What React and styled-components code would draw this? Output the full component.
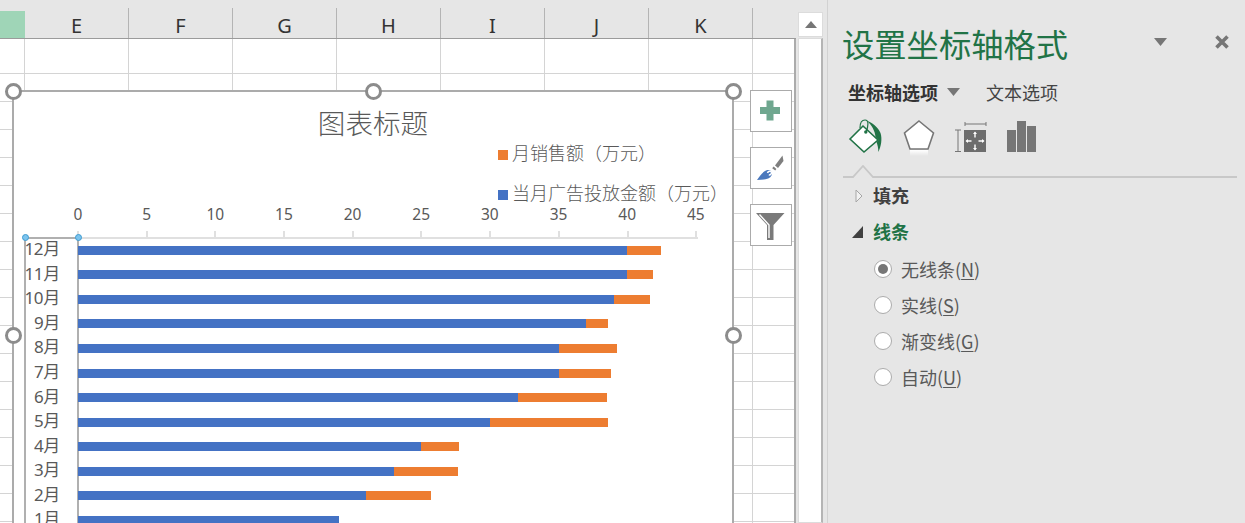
import React from "react";
import styled, { createGlobalStyle } from "styled-components";

const FONT = `"Noto Sans", "Noto Sans CJK SC", sans-serif`;
const CJK = `"Noto Sans CJK SC", "Noto Sans", sans-serif`;
const GREEN = "#217346";
const GRID = "#d4d4d4";

const Global = createGlobalStyle`
  html, body { margin: 0; padding: 0; background: #e6e6e6; overflow: hidden; }
  * { box-sizing: border-box; }
`;

const Page = styled.div`
  display: flex; width: 1245px; height: 523px; overflow: hidden;
  background: #e6e6e6; font-family: ${FONT}; color: #595959;
`;

/* ---- worksheet ---- */
const Sheet = styled.div`
  width: 796px; height: 523px; display: flex; flex-direction: column; flex: none;
`;
const ColHeader = styled.div`
  display: flex; align-items: flex-end; height: 39px; flex: none;
  border-bottom: 1px solid #9b9b9b;
`;
const Corner = styled.div`
  width: 25px; height: 27px; background: #9fd5b7; flex: none;
`;
const ColCell = styled.div`
  width: ${p => p.$w || 104}px; height: 30px; flex: none;
  display: flex; justify-content: center; align-items: center;
  border-right: ${p => (p.$last ? "none" : "1px solid #b4b4b4")};
  font-size: 20px; color: #333; line-height: 1; padding-top: 5px;
`;
const Grid = styled.div`
  position: relative; flex: 1; background: #fff; overflow: hidden;
  border-right: 2px solid #ababab;
`;
const GridRow = styled.div`
  height: ${p => p.$h}px;
  border-bottom: 1px solid ${GRID};
  padding-left: 24px;
  display: flex;
`;
const GridCell = styled.div`
  width: 104px; flex: none; height: 100%;
  border-left: 1px solid ${GRID};
`;

/* ---- chart ---- */
const Chart = styled.div`
  position: absolute; left: 12px; top: 51px; width: 722px; height: 520px;
  background: #fff; border: 2px solid #ababab; display: flex; flex-direction: column;
`;
const Handle = styled.div`
  position: absolute; width: 17px; height: 17px; border-radius: 50%;
  background: #fff; border: 3px solid #8c8c8c;
  left: ${p => p.$x - 8.5 - 14}px; top: ${p => p.$y - 8.5 - 92}px; z-index: 3;
`;
const ChartTitle = styled.div`
  padding-top: 11px; height: 50px; line-height: 38px; text-align: center; flex: none;
  font-family: ${CJK}; font-size: 27.6px; font-weight: 300; color: #595959;
`;
const Legend = styled.div`
  display: flex; flex-direction: column; gap: 20px; margin: 1px 0 0 484px; flex: none;
`;
const LegendItem = styled.div`
  display: flex; align-items: center; gap: 4px; height: 20px; line-height: 20px; white-space: nowrap;
  font-family: ${CJK}; font-size: 18px; font-weight: 300; color: #595959;
`;
const LegendText = styled.span`
  padding-bottom: 2px;
`;
const Swatch = styled.span`
  width: 10px; height: 10px; flex: none; margin-top: 4px; background: ${p => p.$c};
`;
const AxisLabels = styled.div`
  display: flex; margin: 1px 0 0 29.7px; height: 20px; flex: none;
`;
const AxisLabel = styled.div`
  width: 68.65px; flex: none; text-align: center; font-size: 15.5px; line-height: 20px; color: #595959;
`;
const AxisLine = styled.div`
  margin: 7px 0 0 63px; width: 621px; height: 8px; border-bottom: 2px solid #e0e0e0; flex: none;
  background-image: repeating-linear-gradient(to right, #e0e0e0 0 2px, transparent 2px 68.7px);
`;
const Plot = styled.div`
  position: relative; margin-top: -1px;
`;
const SelectBox = styled.div`
  position: absolute; left: 10px; top: -1px; width: 55px; height: 400px;
  border: 2px solid #b0b0b0; border-bottom: none;
`;
const BlueDot = styled.div`
  position: absolute; top: -4px; left: ${p => p.$x}px; width: 7px; height: 7px; border-radius: 50%;
  background: #7cc4ee; border: 1px solid #3f9bd0; z-index: 2;
`;
const BarRow = styled.div`
  display: flex; align-items: center; height: 24.55px; position: relative;
`;
const MonthLabel = styled.div`
  width: 64px; flex: none; padding: 0 18px 2px 0; text-align: right; white-space: nowrap;
  font-size: 17px; line-height: 20px; color: #595959;
  font-family: ${FONT}; letter-spacing: -0.3px;
`;
const Segment = styled.div`
  height: 9px; background: ${p => p.$c}; flex: none;
`;

/* ---- chart side buttons ---- */
const ChartTools = styled.div`
  position: absolute; left: 750px; top: 51px; display: flex; flex-direction: column; gap: 15px; z-index: 4;
`;
const ToolButton = styled.div`
  width: 42px; height: 42px; background: #fff; border: 1px solid #ababab; display: flex;
`;

/* ---- scrollbar ---- */
const Scrollbar = styled.div`
  width: 25px; margin-left: 2px; height: 523px; flex: none; padding-top: 12px;
  display: flex; flex-direction: column;
`;
const ScrollUp = styled.div`
  height: 25px; background: #fff; border: 1px solid #dcdcdc; display: flex; align-items: center; justify-content: center;
`;
const ScrollTrack = styled.div`
  flex: 1; background: #fff; border: 1px solid #dcdcdc; border-right: 2px solid #b5b5b5; margin-top: 1px;
`;

/* ---- format pane ---- */
const Pane = styled.div`
  flex: 1; margin-left: 4px; padding-left: 14px; border-left: 1px solid #d2d2d2; height: 523px;
  display: flex; flex-direction: column;
`;
const TitleRow = styled.div`
  display: flex; align-items: center; height: 46px; margin-top: 20px; position: relative;
`;
const PaneTitle = styled.div`
  font-family: ${CJK}; font-size: 32.3px; line-height: 46px; color: ${GREEN}; white-space: nowrap; width: 312px; font-weight: 400;
`;
const TitleActions = styled.div`
  display: flex; align-items: center; gap: 48px; margin-top: -2px;
`;
const Tabs = styled.div`
  display: flex; align-items: center; gap: 9px; height: 28px; margin: 12px 0 0 6px;
`;
const Tab = styled.div`
  font-family: ${CJK}; font-size: 18px; line-height: 28px; white-space: nowrap; margin-left: ${p => p.$ml || 0}px;
  font-weight: ${p => (p.$active ? 700 : 400)}; color: ${p => (p.$active ? "#333" : "#444")};
`;
const IconRow = styled.div`
  display: flex; margin: 12px 0 0 6px; height: 38px;
`;
const IconSlot = styled.svg`
  display: block; flex: none; margin-left: ${p => p.$ml || 0}px;
`;
const Separator = styled.svg`
  display: block; margin: 9px 0 0 1px; flex: none;
`;
const SectionRow = styled.div`
  display: flex; align-items: center; height: ${p => p.$h}px; position: relative; padding: 0 0 2px 31px;
`;
const SectionLabel = styled.div`
  font-family: ${CJK}; font-size: 18px; font-weight: 700; color: ${p => (p.$on ? GREEN : "#404040")};
`;
const Marker = styled.svg`
  position: absolute; left: ${p => p.$x}px; top: 50%; transform: translateY(-50%);
`;
const Options = styled.div`
  display: flex; flex-direction: column; margin: 2px 0 0 32px;
`;
const Option = styled.div`
  display: flex; align-items: center; gap: 9px; height: 36px; font-size: 18px; color: #595959; font-family: ${CJK};
`;
const RadioDot = styled.span`
  width: 18px; height: 18px; border-radius: 50%; background: #fff; border: 1.5px solid #ababab;
  display: flex; align-items: center; justify-content: center; flex: none;
  &::after {
    content: ""; width: 10px; height: 10px; border-radius: 50%;
    background: ${p => (p.$on ? "#767676" : "transparent")};
  }
`;
const Key = styled.span`
  text-decoration: underline; text-underline-offset: 2px;
`;
const Tri = ({ w, h, c = "#767676" }) => (
  <svg width={w} height={h} viewBox={`0 0 ${w} ${h}`} style={{ display: "block", flex: "none" }}>
    <path d={`M0 0H${w}L${w / 2} ${h}Z`} fill={c} />
  </svg>
);

const columns = ["E", "F", "G", "H", "I", "J", "K"];
const X0 = 78, UNIT = 13.735;
const months = [
  ["12月", 40, 661], ["11月", 40, 653], ["10月", 39, 650], ["9月", 37, 608],
  ["8月", 35, 617], ["7月", 35, 611], ["6月", 32, 607], ["5月", 30, 608],
  ["4月", 25, 459], ["3月", 23, 458], ["2月", 21, 431], ["1月", 19, 339],
];
const rowHeights = [35, ...Array(17).fill(28)];
const ticks = [0, 5, 10, 15, 20, 25, 30, 35, 40, 45];

export default function App() {
  return (
    <Page>
      <Global />
      <Sheet>
        <ColHeader>
          <Corner />
          {columns.map(c => <ColCell key={c}>{c}</ColCell>)}
          <ColCell $w={43} $last />
        </ColHeader>
        <Grid>
          {rowHeights.map((h, i) => (
            <GridRow key={i} $h={h}>
              {Array.from({ length: 8 }, (_, j) => <GridCell key={j} />)}
            </GridRow>
          ))}
          <Chart>
            <Handle $x={13} $y={91} />
            <Handle $x={373} $y={91} />
            <Handle $x={733} $y={91} />
            <Handle $x={13} $y={335} />
            <Handle $x={733} $y={335} />
            <ChartTitle>图表标题</ChartTitle>
            <Legend>
              <LegendItem><Swatch $c="#ed7d31" /><LegendText>月销售额（万元）</LegendText></LegendItem>
              <LegendItem><Swatch $c="#4472c4" /><LegendText>当月广告投放金额（万元）</LegendText></LegendItem>
            </Legend>
            <AxisLabels>
              {ticks.map(t => <AxisLabel key={t}>{t}</AxisLabel>)}
            </AxisLabels>
            <AxisLine />
            <Plot>
              <SelectBox />
              <BlueDot $x={8} />
              <BlueDot $x={61} />
              {months.map(([m, blue, end]) => {
                const bw = blue * UNIT;
                return (
                  <BarRow key={m}>
                    <MonthLabel>{m}</MonthLabel>
                    <Segment $c="#4472c4" style={{ width: bw }} />
                    <Segment $c="#ed7d31" style={{ width: Math.max(0, end - X0 - bw) }} />
                  </BarRow>
                );
              })}
            </Plot>
          </Chart>
          <ChartTools>
            <ToolButton>
              <svg width="40" height="40" viewBox="0 0 40 40">
                <path d="M15.5 9.5h7v6.5h6.5v7h-6.5v6.5h-7v-6.5h-6.5v-7h6.5z" fill="#6fa78f" />
              </svg>
            </ToolButton>
            <ToolButton>
              <svg width="40" height="40" viewBox="0 0 40 40">
                <path d="M31.5 7.5 L32.5 13 L27 20 L24 17.5Z" fill="#7f7f7f" />
                <path d="M22.6 18.6 L25.4 21 L24.2 22.6 L21.2 20.2Z" fill="#7f7f7f" />
                <path d="M6 32 C9 28 12 23 16.5 22 C20 21.5 22 24.5 20.5 27.5 C19 31 14 32 6 32Z" fill="#4a78bd" />
                <path d="M16.5 25 C17 23 19.6 22.6 20.4 24 C21 25.4 19.6 27.2 17.8 27" fill="none" stroke="#fff" strokeWidth="1.5" />
              </svg>
            </ToolButton>
            <ToolButton>
              <svg width="40" height="40" viewBox="0 0 40 40">
                <path d="M5 8H33.5L22.5 20V35H16V20Z" fill="#7a7a7a" />
                <path d="M8.5 9.5L18 20V33" fill="none" stroke="#fff" strokeWidth="1.4" />
              </svg>
            </ToolButton>
          </ChartTools>
        </Grid>
      </Sheet>

      <Scrollbar>
        <ScrollUp>
          <svg width="12" height="7" viewBox="0 0 12 7"><path d="M0 7L6 0L12 7Z" fill="#767676" /></svg>
        </ScrollUp>
        <ScrollTrack />
      </Scrollbar>

      <Pane>
        <TitleRow>
          <PaneTitle>设置坐标轴格式</PaneTitle>
          <TitleActions>
            <Tri w={13} h={8} />
            <svg width="14" height="14" viewBox="0 0 14 14">
              <path d="M1.5 1.5L12.5 12.5M12.5 1.5L1.5 12.5" stroke="#767676" strokeWidth="3.6" />
            </svg>
          </TitleActions>
        </TitleRow>
        <Tabs>
          <Tab $active>坐标轴选项</Tab>
          <Tri w={13} h={8} />
          <Tab $ml={17}>文本选项</Tab>
        </Tabs>
        <IconRow>
          <IconSlot width="35" height="38" viewBox="0 0 35 38">
            <path d="M2 21L15 8L30 22L16 34Z" fill="#fff" stroke={GREEN} strokeWidth="1.6" />
            <path d="M12 10C12 4 14 2 17 2C21 2 20.5 8 18 14" fill="none" stroke={GREEN} strokeWidth="1.2" />
            <circle cx="17.8" cy="14" r="1.7" fill={GREEN} />
            <path d="M18.7 2.7C24 4.5 30 9 32.5 15C34.5 21 33 29 30.3 34C30.5 30 29.5 27 28.5 24L30.5 22L27.5 19C27 13 24 7 18.7 2.7Z" fill={GREEN} />
          </IconSlot>
          <IconSlot $ml={20} width="32" height="38" viewBox="0 0 32 38">
            <defs>
              <linearGradient id="fade" x1="0" y1="0" x2="0" y2="1">
                <stop offset="0" stopColor="#fff" />
                <stop offset="1" stopColor="#fff" stopOpacity="0" />
              </linearGradient>
            </defs>
            <path d="M16 3L30.5 15L25 31H7L1.5 15Z" fill="#fff" stroke="#767676" strokeWidth="1.6" />
            <rect x="7" y="32" width="18" height="6" fill="url(#fade)" />
          </IconSlot>
          <IconSlot $ml={19} width="34" height="38" viewBox="0 0 34 38">
            <path d="M11 6H32M11 4V8M32 4V8M4 12V33.5M1 12H7M1 33.5H7" fill="none" stroke="#767676" strokeWidth="1" />
            <rect x="10" y="12" width="22" height="22" fill="#6d6d6d" />
            <path d="M21 14.5V19.5M21 26.5V31.5M12.5 23H17.5M24.5 23H29.5" stroke="#fff" strokeWidth="1.4" />
            <path d="M21 13.5l-2 2.5h4zM21 32.5l-2-2.5h4zM11.5 23l2.5-2v4zM30.5 23l-2.5-2v4z" fill="#fff" />
          </IconSlot>
          <IconSlot $ml={19} width="30" height="38" viewBox="0 0 30 38">
            <rect x="0" y="12" width="9" height="22" fill="#767676" />
            <rect x="10" y="3" width="9" height="31" fill="#767676" />
            <rect x="20" y="8" width="9" height="26" fill="#767676" />
          </IconSlot>
        </IconRow>
        <Separator width="394" height="13" viewBox="0 0 394 13">
          <path d="M0 12H10L20 1L30 12H394" fill="none" stroke="#c8c8c8" strokeWidth="1.8" />
        </Separator>
        <SectionRow $h={36}>
          <Marker $x={13} width="8" height="14" viewBox="0 0 8 14">
            <path d="M1 1L7 7L1 13Z" fill="#f2f2f2" stroke="#a6a6a6" />
          </Marker>
          <SectionLabel>填充</SectionLabel>
        </SectionRow>
        <SectionRow $h={35}>
          <Marker $x={10} width="11" height="12" viewBox="0 0 11 12">
            <path d="M11 0V12H0Z" fill="#404040" />
          </Marker>
          <SectionLabel $on>线条</SectionLabel>
        </SectionRow>
        <Options>
          <Option><RadioDot $on /><span>无线条(<Key>N</Key>)</span></Option>
          <Option><RadioDot /><span>实线(<Key>S</Key>)</span></Option>
          <Option><RadioDot /><span>渐变线(<Key>G</Key>)</span></Option>
          <Option><RadioDot /><span>自动(<Key>U</Key>)</span></Option>
        </Options>
      </Pane>
    </Page>
  );
}
